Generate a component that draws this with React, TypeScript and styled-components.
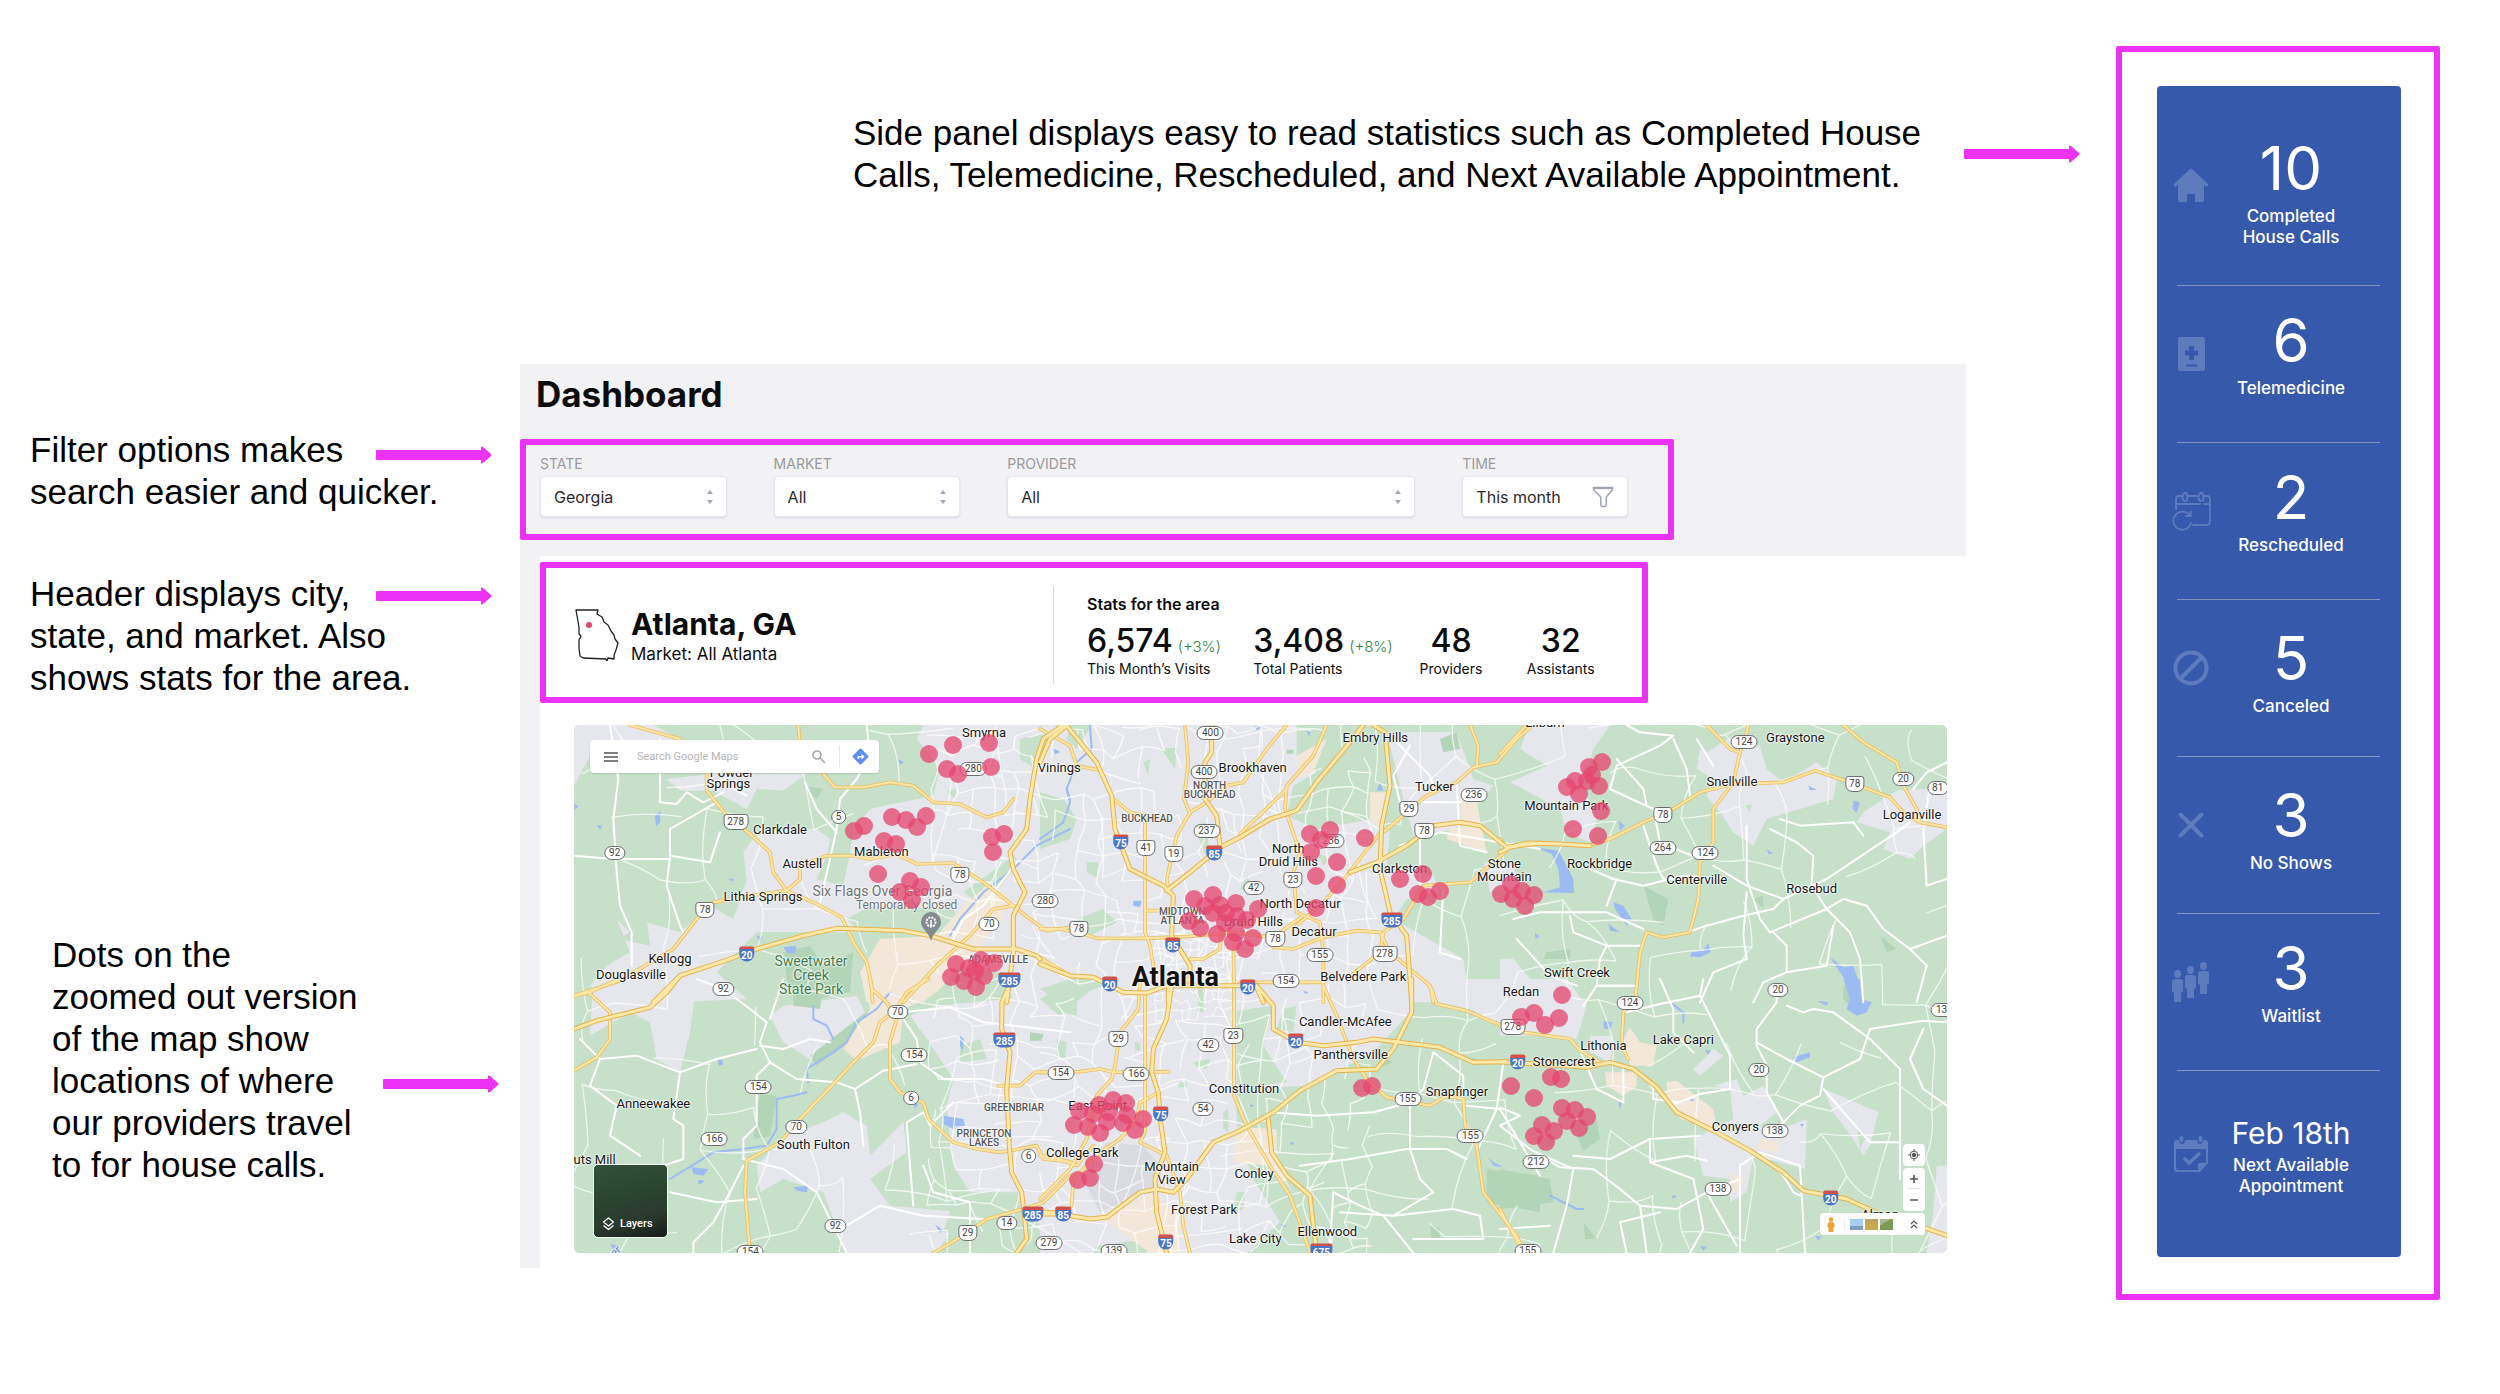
import React from "react";
import styled, { createGlobalStyle, css } from "styled-components";

const MAGENTA = "#ec33f5";
const GREY = "#f2f2f4";
const NAVY = "#3759ab";
const NAVY_ICON = "#5e7bbd";
const UI = `Inter, "Liberation Sans", sans-serif`;
const MAP_FONT = `Roboto, "Liberation Sans", sans-serif`;

const Global = createGlobalStyle`
  * { box-sizing: border-box; }
  body { margin: 0; background: #fff; color: #0c0c0e; font-family: ${UI}; }
  h1, h2, h3, p, dl, dd, dt, ul { margin: 0; padding: 0; }
  button, input, select { font: inherit; color: inherit; }
`;

/* ---------- page ---------- */

const Page = styled.div`
  display: grid;
  grid-template-columns: 520px minmax(0, 1fr) 324px;
  align-items: start;
  padding: 46px 60px 94px 0;
`;

const NotesColumn = styled.aside`
  display: flex;
  flex-direction: column;
  padding: 383px 28px 0 30px;
`;

const MainColumn = styled.main`
  display: flex;
  flex-direction: column;
  padding-top: 66px;
`;

const Frame = styled.section`
  border: 6px solid ${MAGENTA};
  border-radius: 2px;
`;

/* ---------- notes ---------- */

const Note = styled.div<{ $space?: number; $inset?: number }>`
  display: grid;
  grid-template-columns: minmax(0, 1fr) 116px;
  margin-top: ${(p) => p.$space ?? 0}px;
  margin-left: ${(p) => p.$inset ?? 0}px;
  margin-right: ${(p) => (p.$inset ? -7 : 0)}px;
`;

const NoteText = styled.p`
  grid-area: 1 / 1 / 2 / -1;
  font: 35px/42px "Liberation Sans", Arial, sans-serif;
  color: #000;
`;

const NoteArrow = styled.div<{ $drop: number }>`
  grid-area: 1 / 2;
  display: flex;
  align-items: flex-start;
  padding-top: ${(p) => p.$drop}px;
`;

const TopNote = styled.div`
  display: flex;
  align-items: center;
  justify-content: space-between;
  padding: 0 36px 0 333px;
`;

const Arrow = () => (
  <svg width="116" height="18" viewBox="0 0 116 18" aria-hidden="true">
    <path
      d="M1 4h104V1.500q0-1.500 2-.5l8 7q1 1 0 2l-8 7q-2 1-2-.5V14H1q-1 0-1-1V5q0-1 1-1z"
      fill={MAGENTA}
    />
  </svg>
);

/* ---------- dashboard head ---------- */

const Dashboard = styled.article`
  margin: 168px 150px 0 0;
`;

const DashHead = styled.header`
  background: ${GREY};
  padding: 8px 292px 16px 0;
`;

const DashTitle = styled.h1`
  padding-left: 16px;
  margin-bottom: 23px;
  font-size: 35px;
  line-height: 44px;
  font-weight: 700;
`;

const Filters = styled(Frame).attrs({ as: "form" })`
  display: grid;
  grid-template-columns: 187fr 187fr 409fr 166fr;
  gap: 47px;
  padding: 10px 40px 17px 14px;
`;

const Field = styled.div`
  display: flex;
  flex-direction: column;
  gap: 3px;
`;

const FieldLabel = styled.label`
  font-size: 14px;
  line-height: 18px;
  color: #9a9a9e;
`;

const control = css`
  width: 100%;
  height: 41px;
  padding: 0 13px;
  border: 1px solid #e6e7ee;
  border-radius: 4px;
  background: #fff;
  box-shadow: 0 1px 2px rgba(60, 70, 120, 0.14);
  font-family: ${UI};
  font-size: 16px;
  color: #2a2a2e;
`;

const SelectShell = styled.div`
  display: grid;
  align-items: center;
  > * { grid-area: 1 / 1; }
  svg { justify-self: end; margin-right: 12px; pointer-events: none; }
`;

const Select = styled.select`
  ${control}
  appearance: none;
`;

const TimeButton = styled.button`
  ${control}
  display: flex;
  align-items: center;
  justify-content: space-between;
`;

const Chevrons = () => (
  <svg width="10" height="14" viewBox="0 0 10 14" aria-hidden="true" fill="#a3a6b8">
    <path d="M5 0l3 4H2zM5 14l3-4H2z" />
  </svg>
);

const FunnelIcon = () => (
  <svg width="22" height="22" viewBox="0 0 22 22" fill="none" stroke="#9fa5b5" strokeWidth="1.500" strokeLinejoin="round" aria-hidden="true">
    <path d="M1.500 1.500h19v2.200l-6.300 7.300v8q0 1.500-1.500 1.500h-2.400q-1.500 0-1.500-1.500v-8L1.500 3.700z" />
    <path d="M1.500 2.400h19" />
  </svg>
);

const Picker = ({ id, label, value }: { id: string; label: string; value: string }) => (
  <Field>
    <FieldLabel htmlFor={id}>{label}</FieldLabel>
    <SelectShell>
      <Select id={id} defaultValue={value}>
        <option>{value}</option>
      </Select>
      <Chevrons />
    </SelectShell>
  </Field>
);

/* ---------- area card ---------- */

const DashBody = styled.div`
  border-left: 20px solid ${GREY};
  padding: 6px 0 15px;
`;

const AreaCard = styled(Frame)`
  display: grid;
  grid-template-columns: 507fr 589fr;
  align-items: center;
  margin-right: 318px;
  padding: 18px 0 13px;
`;

const Place = styled.div`
  display: flex;
  align-items: center;
  gap: 12px;
  padding-left: 29px;
`;

const PlaceName = styled.h2`
  font-size: 30px;
  line-height: 38px;
  font-weight: 700;
`;

const PlaceMarket = styled.p`
  font-size: 17px;
  line-height: 22px;
`;

const AreaStats = styled.div`
  border-left: 1px solid #dcdde2;
  padding: 8px 0 6px 33px;
`;

const StatsTitle = styled.h3`
  font-size: 16px;
  line-height: 20px;
  font-weight: 600;
  margin-bottom: 7px;
`;

const StatsGrid = styled.dl`
  display: grid;
  grid-template-columns: 166fr 166fr 107fr 115fr;
  justify-items: start;
`;

const Stat = styled.div<{ $centered?: boolean }>`
  display: flex;
  flex-direction: column-reverse;
  text-align: ${(p) => (p.$centered ? "center" : "left")};
  white-space: nowrap;
`;

const StatName = styled.dt`
  font-size: 14px;
  line-height: 18px;
`;

const StatValue = styled.dd`
  font-size: 32px;
  line-height: 39px;
  font-weight: 500;
`;

const Change = styled.span`
  margin-left: 5px;
  font-size: 15px;
  line-height: 15px;
  font-weight: 300;
  color: #2f8440;
`;

const GeorgiaOutline = () => (
  <svg width="44" height="52" viewBox="0 0 44 52" fill="none" stroke="#222" strokeWidth="1.300" strokeLinejoin="round" aria-hidden="true">
    <path d="M1 1h22l-1 4 5 3 2 5 4 3 3 6 3 4 1 4 3 4-2 7-2 5v4l-6-1-1 3-1-2-23-1-3-2-1-8 0-8 2-4-2-2L4 18z" />
    <circle cx="14" cy="16" r="3" fill="#e5466e" stroke="none" />
  </svg>
);

/* ---------- side panel ---------- */

const SideFrame = styled(Frame).attrs({ as: "aside" })`
  padding: 34px 33px 37px 35px;
`;

const SidePanel = styled.ul`
  list-style: none;
  background: ${NAVY};
  border-radius: 4px;
  color: #fff;
`;

const SideItem = styled.li<{ $kind: "first" | "mid" | "low" | "last" }>`
  display: grid;
  grid-template-columns: 40px 160px;
  padding-left: 14px;
  height: ${(p) => ({ first: 199, mid: 157, low: 157, last: 187 })[p.$kind]}px;
  &:not(:first-child)::before {
    content: "";
    grid-column: 1 / -1;
    height: 1px;
    margin: 0 -9px 0 6px;
    background: #8795be;
  }
  grid-template-rows: ${(p) => (p.$kind === "first" ? "1fr" : "1px 1fr")};
`;

const SideIcon = styled.div<{ $raised: boolean }>`
  display: grid;
  place-items: center;
  padding-bottom: ${(p) => (p.$raised ? 20 : 0)}px;
  color: ${NAVY_ICON};
`;

const SideText = styled.div<{ $kind: "first" | "mid" | "low" | "last" }>`
  padding-top: ${(p) => ({ first: 52, mid: 24, low: 28, last: 44 })[p.$kind]}px;
  text-align: center;
  font-size: 17px;
  line-height: 21px;
  font-weight: 500;
`;

const SideNumber = styled.p<{ $date: boolean }>`
  margin-bottom: ${(p) => (p.$date ? 4 : 8)}px;
  font-size: ${(p) => (p.$date ? 30 : 60)}px;
  line-height: ${(p) => (p.$date ? 36 : 60)}px;
  font-weight: 400;
`;

const HouseIcon = () => (
  <svg width="36" height="33" viewBox="0 0 36 33" fill="currentColor">
    <path d="M18 0q1 0 2 1l15 14q1 1.500-.5 2.500-1 .3-2-.5L31 15.700V31q0 2-2 2h-7v-8h-8v8H7q-2 0-2-2V15.700L3.500 17q-1 .8-2 .5Q0 16.500 1 15L16 1q1-1 2-1z" />
  </svg>
);
const MedIcon = () => (
  <svg width="27" height="34" viewBox="0 0 27 34" fill="currentColor">
    <path fillRule="evenodd" d="M2 0h23q2 0 2 2v30q0 2-2 2H2q-2 0-2-2V2q0-2 2-2zm9 9v4.500H7v5h4V23h5v-4.500h4v-5h-4V9zM8 27.500V29.500h11v-2z" />
  </svg>
);
const RescheduleIcon = () => (
  <svg width="40" height="39" viewBox="0 0 40 39" fill="none" stroke="currentColor" strokeWidth="1.800" strokeLinecap="round">
    <path d="M5 17V7q0-3 3-3h3M17 4h9M33 4h3q3 0 3 3v22q0 4-4 4H22M5 12h24M33 12h6" />
    <ellipse cx="14" cy="5" rx="2.500" ry="4" />
    <ellipse cx="30" cy="5" rx="2.500" ry="4" />
    <path d="M19 24a9 9 0 1 0 1 7M15 24h4.500v-4.500" />
  </svg>
);
const BanIcon = () => (
  <svg width="36" height="36" viewBox="0 0 36 36" fill="none" stroke="currentColor" strokeWidth="4">
    <circle cx="18" cy="18" r="15.500" />
    <path d="M7.500 28.500l21-21" />
  </svg>
);
const CrossIcon = () => (
  <svg width="26" height="26" viewBox="0 0 26 26" stroke="currentColor" strokeWidth="4" strokeLinecap="round">
    <path d="M2.500 2.500l21 21M23.500 2.500l-21 21" />
  </svg>
);
const PeopleIcon = () => (
  <svg width="38" height="40" viewBox="0 0 38 40" fill="currentColor">
    {[
      [0, 8],
      [13, 4],
      [26, 0],
    ].map(([x, y]) => (
      <g key={x} transform={`translate(${x} ${y})`}>
        <ellipse cx="5.500" cy="4" rx="3.500" ry="4" />
        <path d="M3 9h5q3 0 3 3v9.500q0 1-1 1H9V32H2v-9.500H1q-1 0-1-1V12q0-3 3-3z" />
      </g>
    ))}
  </svg>
);
const BookedIcon = () => (
  <svg width="34" height="36" viewBox="0 0 34 36" fill="currentColor">
    <path fillRule="evenodd" d="M3 4h2q0 4 3 4t3-4h12q0 4 3 4t3-4h2q3 0 3 3v20l-8 9H3q-3 0-3-3V7q0-3 3-3zm-1 9v19q0 2 2 2h20v-5q0-2 2-2h6V13z" />
    <ellipse cx="7.500" cy="3" rx="2" ry="3" />
    <ellipse cx="26.500" cy="3" rx="2" ry="3" />
    <path d="M10 22l5 5 11-10" fill="none" stroke="currentColor" strokeWidth="3.500" />
  </svg>
);

type Kind = "first" | "mid" | "low" | "last";
const SIDE: { kind: Kind; icon: React.ReactNode; value: string; lines: string[] }[] = [
  { kind: "first", icon: <HouseIcon />, value: "10", lines: ["Completed", "House Calls"] },
  { kind: "mid", icon: <MedIcon />, value: "6", lines: ["Telemedicine"] },
  { kind: "mid", icon: <RescheduleIcon />, value: "2", lines: ["Rescheduled"] },
  { kind: "low", icon: <BanIcon />, value: "5", lines: ["Canceled"] },
  { kind: "low", icon: <CrossIcon />, value: "3", lines: ["No Shows"] },
  { kind: "mid", icon: <PeopleIcon />, value: "3", lines: ["Waitlist"] },
  { kind: "last", icon: <BookedIcon />, value: "Feb 18th", lines: ["Next Available", "Appointment"] },
];

/* ---------- map geography ----------
   The map is surveyed in six tiles, three map units to one pixel. */

type TileId = "A" | "B" | "C" | "D" | "E" | "F";
const TILE: Record<TileId, [number, number]> = {
  A: [-12, -18],
  B: [1398, -18],
  C: [2778, -18],
  D: [-12, 762],
  E: [1398, 762],
  F: [2778, 762],
};

const URBAN: Record<TileId, string[]> = {
  A: [
    "12,18 250,18 330,60 200,75 60,70 60,110 12,200",
    "290,180 420,165 710,165 640,215 560,210 530,270 430,215 330,215",
    "540,370 590,330 740,330 780,360 770,410 740,480 820,500 840,400 850,330 900,270 940,260 1090,230 1110,150 1040,60 1060,18 1520,18 1520,850 1330,850 1300,760 1130,740 1180,640 1150,570 900,560 830,600 870,640 700,640 560,640 440,760 530,840 300,850 250,800 130,850 60,800 110,740 180,700 140,600 190,650 230,610 330,640 420,560 490,600 530,480 520,400",
  ],
  B: [
    "0,18 770,18 770,110 830,160 760,200 740,290 830,330 1000,300 1050,330 1040,440 1180,470 1200,520 1100,540 1060,600 1130,640 1270,720 1290,850 0,850",
    "1040,40 1250,40 1300,180 1360,200 1250,330 1120,350 1080,200",
    "1330,430 1420,440 1440,500 1350,520",
  ],
  C: [
    "90,18 330,18 280,90 250,200 290,300 270,370 200,340 180,270 30,190 140,140 60,90",
    "600,90 620,100 700,50 780,80 800,150 850,190 950,130 1010,180 1000,240 800,300 760,380 700,340 660,280 620,230 640,180 590,150",
    "1190,215 1341,205 1341,330 1270,380 1230,420 1150,390 1170,340 1070,310 1090,280",
    "0,720 40,720 90,780 200,820 220,850 0,850",
  ],
  D: [
    "70,0 380,0 360,160 330,280 260,240 240,130 180,100 60,170",
    "640,80 860,50 890,110 780,190 720,240 640,190 600,110",
    "1020,110 1100,80 1520,40 1520,822 1420,822 1400,700 1200,640 1150,560 1130,380 1150,300 1070,180",
    "650,470 760,430 820,400 890,440 900,530 1000,430 1010,520 900,600 960,680 1180,700 1100,822 830,822 760,640 640,600 570,640 560,560",
  ],
  E: [
    "0,0 1150,0 1110,100 1000,220 800,320 590,330 590,460 640,600 720,730 620,822 0,822",
    "1150,0 1500,0 1500,160 1380,140 1290,90 1200,70",
  ],
  F: [
    "0,0 200,0 260,80 230,180 100,170 0,170",
    "580,270 640,210 670,230 600,290",
    "580,480 700,420 690,330 640,320 710,300 730,350 790,320 830,400 780,440 820,460 920,420 915,570 760,530 740,640 690,670 690,600 610,590",
    "970,330 1020,350 1135,400 1110,500 1090,530 1060,480 1000,400",
    "1310,560 1341,560 1341,822 1280,822 1300,700",
    "270,170 340,170 330,250 270,220",
  ],
};

const GREEN: Record<TileId, string[]> = {
  A: ["1350,60 1440,40 1400,150 1350,120", "1180,520 1330,410 1350,430 1240,560", "1130,215 1160,210 1155,240", "150,660 230,600 240,680"],
  B: ["90,18 155,18 110,90 80,60", "365,90 410,85 405,150", "0,220 70,240 110,300 90,360 0,390", "110,600 190,570 230,610 150,650", "140,430 175,430 170,475 140,460", "310,130 330,120 325,170", "830,400 870,420 850,440", "0,810 120,770 190,800 60,850", "460,320 500,310 510,440", "620,470 650,520 600,510"],
  C: ["735,260 755,255 750,280"],
  D: ["1170,200 1230,180 1250,240 1170,250", "1430,50 1520,20 1520,110 1440,90", "1460,180 1490,190 1480,240", "1160,640 1350,640 1350,740 1240,770 1120,760"],
  E: ["0,60 110,0 180,10 60,110", "50,185 80,190 75,240 50,230", "285,190 300,190 300,215 285,215", "475,10 490,20 490,100 475,100", "590,95 700,80 670,200 740,310 590,330", "730,90 770,80 760,160 710,150", "460,250 510,240 500,270 470,265", "415,310 440,310 440,325 415,325", "590,640 615,640 610,690 580,700", "170,800 330,780 320,822 160,822", "550,400 565,390 565,460 550,450"],
  F: ["420,150 460,180 430,200", "1070,440 1100,470 1080,510"],
};

const PARK: Record<TileId, string[]> = {
  A: ["640,700 720,680 760,740 850,700 840,820 690,850 650,780", "700,200 760,210 740,240"],
  B: ["1200,60 1250,40 1260,90 1210,100", "740,92 760,92 760,104 740,104"],
  C: ["430,500 505,540 490,620 460,600", "140,700 210,690 210,720 130,720", "760,540 790,530 790,570", "1140,650 1190,690 1160,700"],
  D: ["570,345 620,350 600,470 550,480", "670,0 760,0 750,90 670,80", "720,230 900,90 850,170 740,260", "1380,160 1420,165 1415,185 1380,185"],
  E: ["1340,570 1500,590 1500,700 1340,670", "1170,735 1200,750 1200,780 1175,780", "1020,230 1060,250 1010,270"],
  F: ["0,570 150,600 160,670 0,690", "230,470 290,420 300,480 250,515", "250,730 290,780 255,780", "1030,20 1060,20 1060,90 1030,60"],
};

const SAND: Record<TileId, string[]> = {
  A: ["930,660 1100,650 1180,560 1260,490 1310,530 1300,600 1190,720 1120,800 1060,850 890,850 870,760"],
  B: ["770,110 860,60 820,160 780,180", "990,220 1040,220 1030,330 990,300", "1260,240 1310,250 1340,400 1220,360 1230,330 1270,320"],
  C: [],
  D: ["880,0 1110,30 1070,60 1000,90 990,190 860,245 820,210 870,130 900,90"],
  E: ["590,445 710,450 710,560 760,640 690,560 580,550", "190,720 340,640 420,720 420,822 330,822"],
  F: ["370,180 390,145 420,190 470,200 460,260 390,260", "315,280 410,280 410,320 370,350 320,320", "500,310 530,305 640,390 650,450 540,420 500,360", "690,580 740,600 700,650", "780,480 840,490 830,520 770,510"],
};

const WATER: Record<TileId, string[]> = {
  A: ["255,290 272,275 270,310 258,322", "80,318 97,320 90,332", "640,685 680,680 675,705 650,700", "12,255 26,262 14,272", "1455,90 1470,100 1455,105", "560,650 578,655 568,668", "985,120 1002,130 990,138", "475,478 492,480 485,488"],
  B: ["1020,190 1030,215 1010,215", "280,545 305,545 300,565 280,560", "40,90 60,98 45,106", "645,20 665,25 650,35", "800,35 812,40 806,52"],
  C: ["105,385 175,395 200,440 220,480 222,522 130,520 180,505 175,450 155,405", "340,550 370,560 395,600 380,620 345,570", "325,615 360,640 330,635", "355,305 375,320 360,335", "1060,245 1080,250 1070,282 1058,270", "575,700 610,695 625,672 632,700 600,715 570,712", "800,390 820,405 805,405", "990,715 1030,745 1060,740 1080,800 1060,845 1040,790", "105,642 118,652 106,660", "925,200 950,212 930,214"],
  D: ["1120,410 1180,420 1185,440 1150,450 1120,435", "365,565 415,570 400,590 370,585", "385,602 405,605 385,618", "670,625 715,620 710,640 680,635", "445,243 458,243 458,258 446,260", "1095,735 1120,755 1110,762", "120,795 145,800 130,810", "1170,170 1182,180 1178,215 1170,200", "1030,370 1045,375 1035,392"],
  E: ["1300,235 1308,250 1298,250", "750,488 762,492 754,500", "722,735 740,740 730,746", "630,375 645,380 632,385", "1345,535 1360,550 1390,565 1360,560", "790,35 806,40 795,45"],
  F: ["1030,0 1080,0 1085,60 1115,70 1100,100 1070,110 1040,90 1050,60", "310,125 338,130 330,150 312,150", "950,65 985,70 980,80", "880,235 930,220 930,235 890,250", "570,360 585,362 575,368", "355,370 366,372 360,392", "615,212 632,215 625,228", "515,650 530,650 520,660", "945,770 965,772 955,785", "600,800 620,803 610,815", "900,435 912,435 905,445"],
};

const HIGHWAY: Record<TileId, string[]> = {
  A: ["250,850 330,770 480,720 560,690 700,650 800,628 1000,635 1080,650 1210,690 1340,690 1400,710 1410,720", "1480,18 1420,60 1400,120 1380,240 1370,330 1320,400 1330,450 1365,520 1330,590 1330,700 1318,790 1310,850"],
  B: ["80,20 170,130 215,230 225,330 270,450 370,500 400,530 395,650 450,740 450,780 385,800 385,850", "380,515 450,460 540,385 600,355 690,300 770,275 830,190 930,70 970,18", "0,130 30,60 80,20 60,18", "1000,18 1035,40 1050,200 1025,320 1020,450 1050,580 1100,650 1115,850", "930,460 1010,430 1100,380 1180,320 1260,310 1320,320 1400,385 1500,372", "0,735 90,770 160,775 250,820 320,822 380,800 600,800 650,805 670,850", "515,18 515,100 495,130 495,240 530,290 540,380"],
  C: ["0,400 30,385 80,372 180,375 270,380"],
  D: ["12,150 80,125 180,100 240,85 290,40 330,-10", "1318,20 1296,70 1295,150 1320,220 1310,330 1318,500 1325,580 1355,640 1362,700 1370,780 1340,822", "1362,695 1500,705"],
  E: ["0,705 60,705 150,720 200,715 300,640 350,630 400,640 440,600 520,490 600,455 700,400 780,335 890,275 1010,270 1060,210 1115,100 1115,0", "395,20 380,120 340,210 335,280 355,340 362,430 375,520 345,600 350,700 380,822", "685,420 695,520 740,590 810,650 820,740 830,822", "650,20 700,80 700,150 770,190 850,200 950,190 1000,180 1200,205 1300,250 1400,248"],
  F: ["0,248 260,265 330,250 400,270 470,325 530,400 640,455 750,515 850,580 910,635 1040,660 1150,710 1270,745 1341,770"],
};

const ARTERIAL: Record<TileId, string[]> = {
  A: [
    "410,165 410,215 470,290 540,345 600,400 610,460 650,515 690,480 690,440 770,410 850,410 900,420 980,405 1040,435 1150,432 1240,490 1330,560 1380,600 1430,635 1500,625",
    "650,515 740,555 815,595 850,670 890,730 905,800 908,850",
    "650,515 540,530 430,550 380,600 310,690 200,755 60,820 12,832",
    "180,18 330,60",
    "685,18 688,60",
    "760,165 795,205 880,205 960,190 1030,200 1090,250 1170,255 1250,295 1300,280 1330,240",
    "1330,560 1270,570 1200,650 1100,740 1000,850",
    "1400,710 1500,770",
  ],
  B: [
    "0,30 90,80 110,140 170,152",
    "215,235 270,280 315,290 315,640 330,680 340,740 340,780",
    "435,18 445,130 432,240 450,285",
    "740,18 680,90 610,190 560,200 500,250 450,280 410,350 380,480 385,510",
    "860,18 820,110 740,200 735,270 780,400 760,460 770,580 840,610 850,700 850,850",
    "600,345 740,210",
    "1030,340 1100,280 1160,230 1250,190 1300,145 1370,130 1430,60 1480,18",
    "1290,18 1315,80 1310,145",
    "770,620 850,550 920,470 1030,330",
    "0,630 60,630 130,645 170,658 320,658 450,652 580,640 700,655 790,590",
    "450,720 490,720 540,690 545,640",
    "700,685 760,690 850,655 950,635 1020,640 1050,700 1170,800 1180,850",
    "1400,395 1360,430 1290,490 1150,500 1090,600 1030,640 1020,700 920,780",
    "580,640 582,850",
    "600,790 850,790",
    "315,575 400,575",
  ],
  C: [
    "0,105 80,18",
    "620,18 690,90 720,100",
    "745,18 735,60 720,100 700,190 640,270 640,370 600,430 595,540 570,640 490,655 440,640 420,700 405,850",
    "270,380 330,360 430,310 520,270 600,220 700,195 850,190 945,155 1050,190 1170,235 1210,280 1260,310 1341,325",
    "1030,18 1090,70 1190,130 1210,200 1250,270 1260,310",
    "0,360 20,385 0,410",
  ],
  D: [
    "12,50 60,35 150,5",
    "50,35 120,100 120,180 80,235 12,275",
    "900,0 905,30 950,70 980,120 960,190 960,300 990,340 1060,370 1075,420 1150,490 1220,510 1290,520 1400,500 1420,540 1500,548",
    "1075,0 1010,40 980,90 930,130 910,190 850,250 790,315 690,420 630,490 530,545 525,640 540,822",
    "1285,320 1350,320 1395,280 1500,280",
    "1500,590 1420,670 1360,690 1250,720 1180,770 1090,822",
  ],
  E: [
    "0,280 120,278 180,270 220,280 385,278",
    "215,300 170,350 140,480 90,570 0,660",
    "355,340 300,370 290,420 240,480 180,520 100,600 95,680",
    "300,0 295,90 240,160 225,260 215,300",
    "315,50 315,460 300,490 380,530 420,640 430,740 450,822",
    "0,530 60,540 110,560 160,500",
    "582,0 582,350 620,440 690,560 750,650 790,760 810,822",
    "850,20 890,110 940,240 980,300 1040,355 1170,380 1220,350 1270,360 1275,440 1310,500 1330,640 1430,770 1455,822",
    "1160,10 1175,30 1190,75 1280,95 1360,130 1400,140",
  ],
  F: ["0,140 70,160 210,180 240,215 300,250", "405,60 370,100 365,200 385,240", "0,690 70,822"],
};

const LOCAL: Record<TileId, string[]> = {
  A: ["120,18 145,180 130,300 140,460 150,560 185,640 185,740", "270,60 270,250 320,255 350,220 400,250 460,220", "440,250 300,330 300,410 420,430 450,340", "12,410 130,420 300,420", "300,410 290,500 330,620 340,640", "860,180 810,240 800,330 780,420 750,550", "860,180 900,110 890,18", "705,190 740,270 800,340", "530,230 470,200", "1340,430 1240,560 1180,600 1150,660"],
  B: ["1060,60 1170,170 1180,200", "1110,80 1060,170 1080,250 1260,250", "1250,190 1260,380 1340,400", "1080,380 1200,340 1500,390", "1140,360 1140,500", "1210,500 1200,700 1260,720"],
  C: ["380,18 420,40 520,50 480,80 350,140 330,210 460,270 480,370 600,420", "350,120 430,210 440,260", "590,60 640,140", "520,60 560,150 570,230", "430,320 470,440 490,480 560,470 680,480", "270,450 340,480 430,500 550,470", "560,640 620,620 730,590 820,570 850,540 740,500 640,440", "850,540 980,480 1130,380 1190,340 1230,310", "740,320 740,480 780,600 810,640 980,570 1030,540 1100,560 1150,630 1230,690 1341,650", "980,570 935,500 940,410 890,370 810,330", "820,640 860,680 860,760 790,790 760,850", "980,570 1050,640 1080,720 1090,850", "1230,690 1280,740 1250,850", "1341,130 1280,160 1240,210", "1290,200 1270,330 1280,500 1341,480", "840,300 900,320 1060,310 1090,350", "740,520 730,650 740,720 640,760 600,850", "40,600 120,580 320,580 430,630", "430,680 320,680 300,720 290,800 410,800", "50,660 150,770 230,800", "210,590 220,640 320,680", "320,560 350,480", "860,760 980,740 1000,620"],
  D: ["380,0 460,30 540,90 590,130 570,190 600,250 680,300 800,310 855,330 940,275 1040,255", "600,250 560,290 560,440 520,480 520,540", "600,120 640,0", "570,200 640,210 720,180 780,190", "855,330 870,400 880,500", "520,540 640,570 740,640 790,740 830,822", "830,740 930,680 1060,710 1240,720", "300,640 440,670 560,660", "30,180 90,240 200,230 330,280 440,240 560,210", "330,280 310,420 340,440 340,540 280,560", "90,240 60,320 140,380 120,470 210,530", "520,560 480,640 430,730 370,790 370,822", "1000,120 1040,180 1050,250 1120,300 1240,300 1310,320", "1000,100 1140,85 1240,130 1500,160", "1150,370 1080,440 1060,400 1010,430 1020,560 1030,680", "1060,560 1090,640 1200,670 1200,822"],
  E: ["690,400 830,410 1000,400 1110,370", "780,560 930,540 1100,510 1220,510 1280,540", "1180,220 1150,330 1110,370 1110,510 1140,600 1180,640 1060,710 900,700", "880,640 870,800", "880,640 960,680 1030,710 1120,822", "1060,710 1240,690 1320,710 1330,780 1120,780", "1180,220 1270,290 1270,360", "1280,380 1380,390 1500,590", "1390,250 1370,390 1310,520"],
  F: ["0,385 60,410 0,440", "0,440 90,510 180,565 280,570 360,630 420,680 440,822", "250,80 290,20 400,20", "110,520 220,570 200,680 160,822", "220,530 330,540 450,480 600,470", "240,215 290,330 370,370 370,260", "420,680 530,690 620,640 720,600", "450,480 450,550 560,530 620,545", "380,100 480,75 600,50 610,0", "600,50 690,230 690,330 600,345 510,380", "830,20 830,70 770,150 770,200 800,260 800,340 850,430", "770,190 860,240 970,295 960,350 900,380 840,440", "970,295 1080,240 1110,150 1270,125 1341,130", "860,80 910,100 940,90 1000,100 1110,180 1200,270 1200,600", "1270,150 1230,240 1270,330 1341,380", "720,822 720,560 780,520 900,560 915,822", "790,530 850,590 880,640 900,650", "380,822 360,730 480,700", "970,330 1110,490 1200,490", "570,822 610,750 580,600 450,550", "150,740 0,750", "480,0 520,90 520,160 580,220", "420,280 460,330 460,360 540,370", "710,800 620,640"],
};

const CREEK: Record<TileId, string[]> = {
  A: ["1500,330 1400,380 1330,450 1240,520 1170,600 1140,650", "1490,210 1500,240"],
  B: ["150,20 155,90 110,130 80,210 90,250 70,310 0,360"],
  C: [],
  D: ["960,40 920,90 860,130 830,190 790,220 710,270 715,310", "710,340 670,350 620,360 620,450 590,500 520,510 430,520 300,600", "730,80 730,120 770,140 790,180"],
  E: [],
  F: ["510,70 550,100 550,130", "150,650 230,690 250,690"],
};

/* Neighbourhood streets: a jittered lattice, tight in town and loose outside it. */
const neighbourhood = (step: number, x0: number, x1: number, y0: number, y1: number, keep: number, seed: number) => {
  let s = seed;
  const rnd = () => {
    s = (s * 16807) % 2147483647;
    return s / 2147483647;
  };
  const cols = Math.ceil((x1 - x0) / step) + 1;
  const rows = Math.ceil((y1 - y0) / step) + 1;
  const pts = Array.from({ length: rows }, (_, r) =>
    Array.from({ length: cols }, (_, c) => [
      Math.round(x0 + c * step + (rnd() - 0.5) * step * 0.7),
      Math.round(y0 + r * step + (rnd() - 0.5) * step * 0.7),
    ])
  );
  let d = "";
  const edge = (a: number[], b: number[]) => {
    if (rnd() > keep) return;
    const mx = Math.round((a[0] + b[0]) / 2 + (rnd() - 0.5) * step * 0.3);
    const my = Math.round((a[1] + b[1]) / 2 + (rnd() - 0.5) * step * 0.3);
    d += `M${a[0]} ${a[1]}Q${mx} ${my} ${b[0]} ${b[1]}`;
  };
  for (let r = 0; r < rows; r++)
    for (let c = 0; c < cols; c++) {
      if (c + 1 < cols) edge(pts[r][c], pts[r][c + 1]);
      if (r + 1 < rows) edge(pts[r][c], pts[r + 1][c]);
    }
  return d;
};
const OUTER = neighbourhood(140, 0, 4119, 0, 1584, 0.42, 77);
const INNER = neighbourhood(62, 1080, 2360, 20, 1560, 0.6, 401);
const CORE = neighbourhood(26, 1740, 1960, 620, 860, 0.7, 91);

const tileIds = Object.keys(TILE) as TileId[];
const Areas = ({ data, fill }: { data: Record<TileId, string[]>; fill: string }) => (
  <>
    {tileIds.map((t) => (
      <g key={t} transform={`translate(${TILE[t].join(" ")})`} fill={fill}>
        {data[t].map((p) => (
          <polygon key={p} points={p} />
        ))}
      </g>
    ))}
  </>
);
const Lines = ({ data, stroke, width }: { data: Record<TileId, string[]>; stroke: string; width: number }) => (
  <>
    {tileIds.map((t) => (
      <g key={t} transform={`translate(${TILE[t].join(" ")})`} fill="none" stroke={stroke} strokeWidth={width} strokeLinejoin="round" strokeLinecap="round">
        {data[t].map((p) => (
          <polyline key={p} points={p} />
        ))}
      </g>
    ))}
  </>
);

const Terrain = () => (
  <svg width="1373" height="528" viewBox="0 0 4119 1584" aria-hidden="true">
    <rect width="4119" height="1584" fill="#c6e0ca" />
    <Areas data={URBAN} fill="#e6e7ec" />
    <polygon points="1598,1252 1708,1262 1758,1322 1738,1392 1578,1462 1528,1362" fill="#dadbe0" />
    <Areas data={GREEN} fill="#c6e0ca" />
    <Areas data={PARK} fill="#b2d5b7" />
    <Areas data={SAND} fill="#f2e7d8" />
    <Areas data={WATER} fill="#9dbbf3" />
    <Lines data={CREEK} stroke="#9dbbf3" width={6} />
    <g fill="none" stroke="#fff" strokeLinecap="round">
      <path d={OUTER} strokeWidth={4} opacity={0.7} />
      <path d={INNER} strokeWidth={4} opacity={0.75} />
      <path d={CORE} strokeWidth={3} opacity={0.8} />
    </g>
    <Lines data={LOCAL} stroke="#fff" width={6} />
    <Lines data={ARTERIAL} stroke="#ebbf62" width={11} />
    <Lines data={ARTERIAL} stroke="#fbe6a6" width={6} />
    <Lines data={HIGHWAY} stroke="#e6b14c" width={15} />
    <Lines data={HIGHWAY} stroke="#fce9a9" width={9} />
  </svg>
);

/* ---------- things pinned on the map ---------- */

const MapArea = styled.div`
  position: relative;
  height: 528px;
  margin: 22px 19px 0 34px;
  border-radius: 6px;
  overflow: hidden;
  background: #c6e0ca;
  font-family: ${MAP_FONT};
`;

const Pinned = styled.span`
  position: absolute;
  transform: translate(-50%, -50%);
`;

type Tone = "town" | "district" | "city" | "park" | "poi" | "small" | "river";
const tones: Record<Tone, ReturnType<typeof css>> = {
  town: css`font-size: 13px; line-height: 13px; color: #161616;`,
  district: css`font-size: 10px; line-height: 9px; font-weight: 500; color: #555;`,
  city: css`font-size: 27px; line-height: 28px; font-weight: 700; color: #111;`,
  park: css`font-size: 14px; line-height: 14px; color: #3f7d4d;`,
  poi: css`font-size: 14px; line-height: 14px; color: #6d7074;`,
  small: css`font-size: 12px; line-height: 12px; color: #6d7074;`,
  river: css`font-size: 11px; line-height: 12px; color: #4c78d0; rotate: -42deg;`,
};

const MapLabel = styled(Pinned)<{ $tone: Tone }>`
  white-space: pre;
  text-align: center;
  text-shadow: 0 0 2px #fff, 0 0 2px #fff, 0 0 3px #fff;
  ${(p) => tones[p.$tone]}
`;

const Shield = styled(Pinned)<{ $type: "s" | "u" | "i" }>`
  font-size: 10px;
  text-align: center;
  ${(p) =>
    p.$type === "s" &&
    css`
      padding: 0 4px;
      border: 1px solid #6b6d70;
      border-radius: 7px;
      line-height: 12px;
      background: #fff;
      color: #444;
    `}
  ${(p) =>
    p.$type === "u" &&
    css`
      padding: 0 3px;
      border: 1px solid #6b6d70;
      border-radius: 3px 3px 7px 7px;
      line-height: 14px;
      background: #fff;
      color: #444;
    `}
  ${(p) =>
    p.$type === "i" &&
    css`
      padding: 2px 2px 0;
      border-radius: 2px 2px 8px 8px;
      line-height: 13px;
      font-weight: 700;
      background: linear-gradient(#d0504e 3px, #4a76c4 3px);
      color: #fff;
    `}
`;

const Dot = styled(Pinned)`
  width: 18px;
  height: 18px;
  border-radius: 50%;
  background: rgba(229, 70, 110, 0.76);
`;

const LABELS: [TileId, number, number, Tone, string][] = [
  ["A", 1242, 40, "town", "Smyrna"],
  ["A", 485, 158, "town", "Powder"],
  ["A", 475, 192, "town", "Springs"],
  ["A", 630, 329, "town", "Clarkdale"],
  ["A", 934, 397, "town", "Mableton"],
  ["A", 697, 431, "town", "Austell"],
  ["A", 579, 532, "town", "Lithia Springs"],
  ["A", 937, 516, "poi", "Six Flags Over Georgia"],
  ["A", 1010, 557, "small", "Temporarily closed"],
  ["A", 300, 716, "town", "Kellogg"],
  ["A", 183, 765, "town", "Douglasville"],
  ["A", 723, 767, "park", "Sweetwater\nCreek\nState Park"],
  ["A", 1284, 721, "district", "ADAMSVILLE"],
  ["B", 58, 144, "town", "Vinings"],
  ["B", 638, 144, "town", "Brookhaven"],
  ["B", 1006, 53, "town", "Embry Hills"],
  ["B", 1183, 200, "town", "Tucker"],
  ["B", 509, 212, "district", "NORTH\nBUCKHEAD"],
  ["B", 321, 296, "district", "BUCKHEAD"],
  ["B", 745, 408, "town", "North\nDruid Hills"],
  ["B", 1079, 446, "town", "Clarkston"],
  ["B", 1393, 454, "town", "Stone\nMountain"],
  ["B", 780, 551, "town", "North Decatur"],
  ["B", 640, 606, "town", "Druid Hills"],
  ["B", 822, 637, "town", "Decatur"],
  ["B", 427, 591, "district", "MIDTOWN\nATLANTA"],
  ["B", 406, 774, "city", "Atlanta"],
  ["B", 970, 772, "town", "Belvedere Park"],
  ["C", 135, 10, "town", "Lilburn"],
  ["C", 886, 53, "town", "Graystone"],
  ["C", 696, 186, "town", "Snellville"],
  ["C", 199, 258, "town", "Mountain Park"],
  ["C", 1236, 286, "town", "Loganville"],
  ["C", 299, 433, "town", "Rockbridge"],
  ["C", 590, 479, "town", "Centerville"],
  ["C", 935, 506, "town", "Rosebud"],
  ["C", 231, 760, "town", "Swift Creek"],
  ["C", 63, 815, "town", "Redan"],
  ["D", 250, 373, "town", "Anneewakee"],
  ["D", 52, 541, "town", "Fouts Mill"],
  ["D", 730, 496, "town", "South Fulton"],
  ["D", 1332, 384, "district", "GREENBRIAR"],
  ["D", 1242, 478, "district", "PRINCETON\nLAKES"],
  ["D", 10, 805, "river", "Chattahoochee River"],
  ["E", 173, 377, "town", "East Point"],
  ["E", 127, 519, "town", "College Park"],
  ["E", 395, 583, "town", "Mountain\nView"],
  ["E", 492, 690, "town", "Forest Park"],
  ["E", 646, 776, "town", "Lake City"],
  ["E", 862, 757, "town", "Ellenwood"],
  ["E", 642, 583, "town", "Conley"],
  ["E", 612, 326, "town", "Constitution"],
  ["E", 916, 126, "town", "Candler-McAfee"],
  ["E", 932, 224, "town", "Panthersville"],
  ["E", 1251, 336, "town", "Snapfinger"],
  ["F", 310, 198, "town", "Lithonia"],
  ["F", 192, 245, "town", "Stonecrest"],
  ["F", 550, 181, "town", "Lake Capri"],
  ["F", 706, 441, "town", "Conyers"],
  ["F", 1140, 706, "town", "Almon"],
];

const SHIELDS: [TileId, number, number, "s" | "u" | "i", string][] = [
  ["A", 1210, 149, "s", "280"], ["A", 806, 293, "s", "5"], ["A", 497, 309, "u", "278"], ["A", 134, 402, "s", "92"],
  ["A", 1170, 467, "u", "78"], ["A", 405, 574, "u", "78"], ["A", 1426, 545, "s", "280"], ["A", 1257, 616, "s", "70"],
  ["A", 530, 704, "i", "20"], ["A", 460, 810, "s", "92"], ["A", 1318, 783, "i", "285"],
  ["B", 511, 42, "s", "400"], ["B", 492, 159, "s", "400"], ["B", 500, 336, "s", "237"], ["B", 243, 370, "i", "75"],
  ["B", 318, 386, "u", "41"], ["B", 401, 406, "u", "19"], ["B", 523, 402, "i", "85"], ["B", 1107, 271, "u", "29"],
  ["B", 1153, 337, "u", "78"], ["B", 1301, 227, "s", "236"], ["B", 873, 365, "s", "236"], ["B", 759, 483, "u", "23"],
  ["B", 641, 508, "s", "42"], ["B", 116, 629, "u", "78"], ["B", 398, 677, "i", "85"], ["B", 706, 660, "u", "78"],
  ["B", 839, 709, "s", "155"], ["B", 1034, 706, "u", "278"], ["B", 1055, 604, "i", "285"], ["B", 737, 787, "s", "154"],
  ["B", 209, 795, "i", "20"], ["B", 623, 804, "i", "20"],
  ["C", 732, 68, "s", "124"], ["C", 1064, 196, "u", "78"], ["C", 1210, 179, "s", "20"], ["C", 1313, 207, "s", "81"],
  ["C", 489, 289, "u", "78"], ["C", 488, 386, "s", "264"], ["C", 616, 403, "s", "124"], ["C", 834, 814, "s", "20"],
  ["D", 983, 100, "s", "70"], ["D", 1303, 183, "i", "285"], ["D", 1033, 228, "s", "154"], ["D", 565, 324, "s", "154"],
  ["D", 1472, 283, "s", "154"], ["D", 1023, 358, "s", "6"], ["D", 679, 445, "s", "70"], ["D", 433, 480, "s", "166"],
  ["D", 1376, 531, "s", "6"], ["D", 1388, 704, "i", "285"], ["D", 796, 741, "s", "92"], ["D", 1193, 761, "u", "29"],
  ["D", 1310, 733, "s", "14"], ["D", 1437, 793, "s", "279"], ["D", 541, 820, "s", "154"],
  ["E", 235, 180, "u", "29"], ["E", 505, 198, "s", "42"], ["E", 580, 171, "u", "23"], ["E", 768, 187, "i", "20"],
  ["E", 289, 284, "s", "166"], ["E", 489, 390, "s", "54"], ["E", 363, 404, "i", "75"], ["E", 1103, 359, "s", "155"],
  ["E", 1291, 470, "s", "155"], ["E", 1433, 249, "i", "20"], ["E", 70, 704, "i", "85"], ["E", 378, 789, "i", "75"],
  ["E", 221, 817, "s", "139"], ["E", 844, 817, "i", "675"], ["E", 1463, 817, "s", "155"],
  ["F", 38, 145, "u", "278"], ["F", 390, 73, "s", "124"], ["F", 777, 273, "s", "20"], ["F", 824, 455, "s", "138"],
  ["F", 108, 548, "s", "212"], ["F", 654, 630, "s", "138"], ["F", 992, 656, "i", "20"], ["F", 1333, 94, "s", "138"],
];

const DOTS: Record<TileId, [number, number][]> = {
  A: [[1148, 78], [1258, 73], [1077, 105], [1131, 149], [1163, 164], [1264, 144], [967, 293], [1007, 304], [1068, 291], [1041, 323], [883, 321], [853, 336], [943, 366], [978, 375], [1303, 346], [1266, 355], [1270, 398], [925, 465], [1021, 487], [1052, 504], [990, 518], [1026, 542], [1158, 736], [1232, 723], [1272, 732], [1142, 774], [1197, 747], [1216, 757], [1243, 772], [1183, 785], [1218, 804]],
  B: [[810, 346], [870, 333], [842, 364], [812, 398], [976, 356], [890, 430], [828, 470], [890, 498], [828, 566], [1080, 479], [1148, 464], [1134, 526], [1165, 535], [1200, 517], [461, 541], [520, 528], [495, 562], [541, 558], [587, 552], [655, 570], [448, 606], [480, 627], [519, 583], [557, 583], [591, 590], [622, 604], [556, 612], [532, 646], [587, 642], [640, 657], [580, 670], [614, 689]],
  C: [[307, 130], [267, 144], [226, 186], [276, 169], [262, 187], [202, 205], [238, 224], [296, 201], [303, 277], [219, 330], [293, 350], [33, 495], [4, 525], [65, 517], [102, 528], [40, 541], [74, 561], [187, 828]],
  D: [],
  E: [[177, 377], [219, 362], [258, 373], [118, 397], [158, 405], [206, 400], [101, 437], [145, 444], [180, 461], [202, 428], [250, 433], [262, 408], [284, 453], [310, 420], [162, 556], [114, 604], [150, 598], [965, 327], [995, 321]],
  F: [[62, 114], [103, 101], [134, 137], [177, 118], [152, 294], [182, 299], [34, 321], [103, 358], [186, 387], [225, 393], [261, 414], [126, 437], [200, 427], [237, 447], [163, 457], [103, 470], [137, 490]],
};

const at = (tile: TileId, x: number, y: number) => ({
  left: (TILE[tile][0] + x) / 3,
  top: (TILE[tile][1] + y) / 3,
});

const PinSvg = styled.svg`
  position: absolute;
  transform: translate(-50%, -50%);
`;

/* ---------- map controls ---------- */

const SearchBar = styled.form`
  position: absolute;
  top: 15px;
  left: 16px;
  display: flex;
  align-items: center;
  width: 289px;
  height: 33px;
  padding: 0 8px 0 10px;
  border-radius: 4px;
  background: #fff;
  box-shadow: 0 1px 2px rgba(0, 0, 0, 0.12);
`;

const IconButton = styled.button`
  display: grid;
  place-items: center;
  width: 22px;
  height: 22px;
  padding: 0;
  border: 0;
  background: none;
`;

const SearchInput = styled.input`
  flex: 1;
  min-width: 0;
  padding: 0;
  margin-left: 15px;
  border: 0;
  font-family: ${MAP_FONT};
  font-size: 11px;
  &::placeholder { color: #b4b4b6; opacity: 1; }
`;

const SearchSplit = styled.span`
  width: 1px;
  height: 21px;
  margin: 0 9px;
  background: #e6e6e8;
`;

const LayersButton = styled.button`
  position: absolute;
  left: 19px;
  bottom: 15px;
  display: flex;
  align-items: flex-end;
  gap: 5px;
  width: 75px;
  height: 74px;
  padding: 0 0 6px 8px;
  border: 1px solid #f4f8f4;
  border-radius: 5px;
  background: linear-gradient(165deg, #32513b 0%, #28452f 45%, #2c3a2e 70%, #171d18 100%);
  font-family: ${MAP_FONT};
  font-size: 11px;
  line-height: 14px;
  font-weight: 500;
  color: #fff;
`;

const CornerTools = styled.div`
  position: absolute;
  right: 22px;
  bottom: 18px;
  display: flex;
  flex-direction: column;
  align-items: flex-end;
  gap: 2px;
`;

const ToolCard = styled.div<{ $row?: boolean }>`
  display: flex;
  flex-direction: ${(p) => (p.$row ? "row" : "column")};
  align-items: center;
  border-radius: 4px;
  background: #fff;
  ${(p) => p.$row && "width: 105px; justify-content: space-between;"}
`;

const Rule = styled.span`
  width: 14px;
  height: 1px;
  margin-top: -2px;
  background: #e6e6e8;
`;

const Thumbs = styled.div`
  display: flex;
  gap: 2px;
  padding-left: 5px;
  margin-right: 8px;
  border-left: 1px solid #ececee;
`;

const Thumb = styled.button<{ $fill: string }>`
  width: 13px;
  height: 11px;
  padding: 0;
  border: 0;
  background: ${(p) => p.$fill};
`;

const MapView = () => (
  <MapArea>
    <Terrain />
    {LABELS.map(([t, x, y, tone, text]) => (
      <MapLabel key={text} $tone={tone} style={at(t, x, y)}>
        {text}
      </MapLabel>
    ))}
    {SHIELDS.map(([t, x, y, type, text]) => (
      <Shield key={`${t}-${x}-${y}`} $type={type} style={at(t, x, y)}>
        {text}
      </Shield>
    ))}
    <PinSvg width="20" height="30" viewBox="0 0 20 30" style={at("A", 1082, 624)} aria-hidden="true">
      <path d="M10 0a10 10 0 0 1 10 10c0 7-8 10-10 19C8 20 0 17 0 10A10 10 0 0 1 10 0z" fill="#858a90" />
      <circle cx="10" cy="10" r="4.500" fill="none" stroke="#fff" strokeWidth="2" strokeDasharray="2 1" />
      <path d="M10 8v6" stroke="#fff" strokeWidth="1.500" />
    </PinSvg>
    {tileIds.flatMap((t) => DOTS[t].map(([x, y]) => <Dot key={`${t}-${x}-${y}`} style={at(t, x, y)} />))}

    <SearchBar>
      <IconButton type="button" aria-label="Menu">
        <svg width="14" height="10" viewBox="0 0 14 10" stroke="#555" strokeWidth="1.500">
          <path d="M0 1h14M0 5h14M0 9h14" />
        </svg>
      </IconButton>
      <SearchInput aria-label="Search Google Maps" placeholder="Search Google Maps" />
      <IconButton type="submit" aria-label="Search">
        <svg width="14" height="14" viewBox="0 0 14 14" fill="none" stroke="#a9a9ab" strokeWidth="1.700">
          <circle cx="5" cy="5" r="4" />
          <path d="M8 8l5 5" />
        </svg>
      </IconButton>
      <SearchSplit />
      <IconButton type="button" aria-label="Directions">
        <svg width="17" height="17" viewBox="0 0 17 17">
          <path d="M7.500 1q1-1 2 0L16 7.500q1 1 0 2L9.500 16q-1 1-2 0L1 9.500q-1-1 0-2z" fill="#5c8ff0" />
          <path d="M5.500 11V8h4V5.800L12.500 8.800 9.500 11.500V9.500H7V11z" fill="#fff" />
        </svg>
      </IconButton>
    </SearchBar>

    <LayersButton type="button">
      <svg width="13" height="14" viewBox="0 0 13 14" fill="none" stroke="#fff" strokeWidth="1.300" strokeLinejoin="round">
        <path d="M6.500 1l5 4-5 4-5-4zM1.500 8.500l5 4 5-4" />
      </svg>
      Layers
    </LayersButton>

    <CornerTools>
      <ToolCard>
        <IconButton type="button" aria-label="My location">
          <svg width="12" height="12" viewBox="0 0 12 12" fill="none" stroke="#555" strokeWidth="1">
            <circle cx="6" cy="6" r="3.800" />
            <circle cx="6" cy="6" r="1.800" fill="#555" />
            <path d="M6 0v2M6 10v2M0 6h2M10 6h2" />
          </svg>
        </IconButton>
      </ToolCard>
      <ToolCard>
        <IconButton type="button" aria-label="Zoom in">
          <svg width="8" height="8" viewBox="0 0 8 8" stroke="#555" strokeWidth="1.600">
            <path d="M4 0v8M0 4h8" />
          </svg>
        </IconButton>
        <Rule />
        <IconButton type="button" aria-label="Zoom out">
          <svg width="8" height="8" viewBox="0 0 8 8" stroke="#555" strokeWidth="1.600">
            <path d="M0 4h8" />
          </svg>
        </IconButton>
      </ToolCard>
      <ToolCard $row>
        <IconButton type="button" aria-label="Street View">
          <svg width="10" height="15" viewBox="0 0 10 15" fill="#e9a63b">
            <circle cx="5" cy="2.500" r="2.300" />
            <path d="M2.500 5h5L9 10H7.500v5h-5v-5H1z" />
          </svg>
        </IconButton>
        <Thumbs>
          <Thumb type="button" aria-label="Coast photo" $fill="linear-gradient(#a9cdf0 60%, #7d9cc0 60%)" />
          <Thumb type="button" aria-label="Field photo" $fill="linear-gradient(#b9a468 25%, #c8a850 25%)" />
          <Thumb type="button" aria-label="Garden photo" $fill="linear-gradient(150deg, #a8b88c 35%, #7d9a4e 35%)" />
        </Thumbs>
        <IconButton type="button" aria-label="Expand">
          <svg width="8" height="9" viewBox="0 0 8 9" fill="none" stroke="#555" strokeWidth="1.200">
            <path d="M1 4l3-3 3 3M1 8l3-3 3 3" />
          </svg>
        </IconButton>
      </ToolCard>
    </CornerTools>
  </MapArea>
);

/* ---------- app ---------- */

export default function App() {
  return (
    <>
      <Global />
      <Page>
        <NotesColumn>
          <Note>
            <NoteText>
              Filter options makes
              <br />
              search easier and quicker.
            </NoteText>
            <NoteArrow $drop={17}>
              <Arrow />
            </NoteArrow>
          </Note>
          <Note $space={60}>
            <NoteText>
              Header displays city,
              <br />
              state, and market. Also
              <br />
              shows stats for the area.
            </NoteText>
            <NoteArrow $drop={14}>
              <Arrow />
            </NoteArrow>
          </Note>
          <Note $space={235} $inset={22}>
            <NoteText>
              Dots on the
              <br />
              zoomed out version
              <br />
              of the map show
              <br />
              locations of where
              <br />
              our providers travel
              <br />
              to for house calls.
            </NoteText>
            <NoteArrow $drop={141}>
              <Arrow />
            </NoteArrow>
          </Note>
        </NotesColumn>

        <MainColumn>
          <TopNote>
            <NoteText>
              Side panel displays easy to read statistics such as Completed House
              <br />
              Calls, Telemedicine, Rescheduled, and Next Available Appointment.
            </NoteText>
            <Arrow />
          </TopNote>

          <Dashboard>
            <DashHead>
              <DashTitle>Dashboard</DashTitle>
              <Filters>
                <Picker id="state" label="STATE" value="Georgia" />
                <Picker id="market" label="MARKET" value="All" />
                <Picker id="provider" label="PROVIDER" value="All" />
                <Field>
                  <FieldLabel htmlFor="time">TIME</FieldLabel>
                  <TimeButton id="time" type="button">
                    This month
                    <FunnelIcon />
                  </TimeButton>
                </Field>
              </Filters>
            </DashHead>

            <DashBody>
              <AreaCard>
                <Place>
                  <GeorgiaOutline />
                  <div>
                    <PlaceName>Atlanta, GA</PlaceName>
                    <PlaceMarket>Market: All Atlanta</PlaceMarket>
                  </div>
                </Place>
                <AreaStats>
                  <StatsTitle>Stats for the area</StatsTitle>
                  <StatsGrid>
                    <Stat>
                      <StatName>This Month’s Visits</StatName>
                      <StatValue>
                        6,574<Change>(+3%)</Change>
                      </StatValue>
                    </Stat>
                    <Stat>
                      <StatName>Total Patients</StatName>
                      <StatValue>
                        3,408<Change>(+8%)</Change>
                      </StatValue>
                    </Stat>
                    <Stat $centered>
                      <StatName>Providers</StatName>
                      <StatValue>48</StatValue>
                    </Stat>
                    <Stat $centered>
                      <StatName>Assistants</StatName>
                      <StatValue>32</StatValue>
                    </Stat>
                  </StatsGrid>
                </AreaStats>
              </AreaCard>
              <MapView />
            </DashBody>
          </Dashboard>
        </MainColumn>

        <SideFrame>
          <SidePanel>
            {SIDE.map((s) => (
              <SideItem key={s.lines[0]} $kind={s.kind}>
                <SideIcon $raised={s.kind !== "first"} aria-hidden="true">
                  {s.icon}
                </SideIcon>
                <SideText $kind={s.kind}>
                  <SideNumber $date={s.kind === "last"}>{s.value}</SideNumber>
                  {s.lines.map((l) => (
                    <p key={l}>{l}</p>
                  ))}
                </SideText>
              </SideItem>
            ))}
          </SidePanel>
        </SideFrame>
      </Page>
    </>
  );
}
